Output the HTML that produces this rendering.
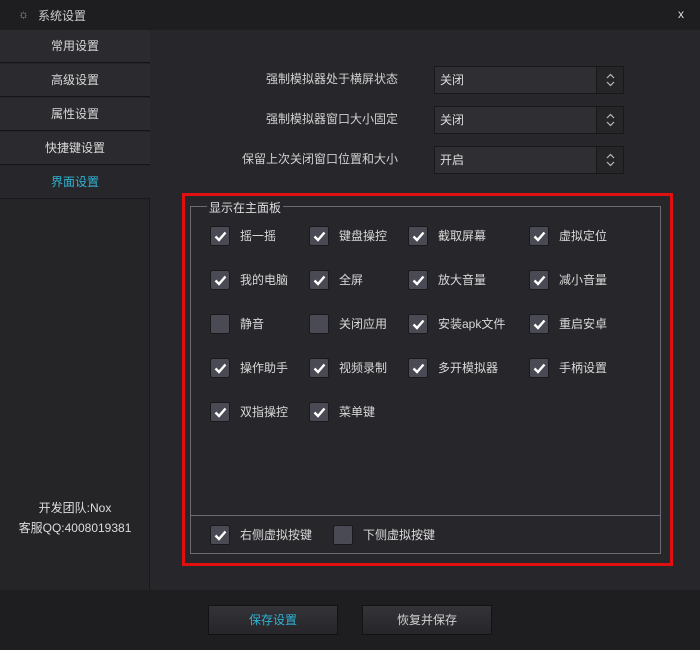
<!DOCTYPE html>
<html><head><meta charset="utf-8"><style>
*{margin:0;padding:0;box-sizing:border-box}
body{width:700px;height:650px;background:#27272b;font-family:"Liberation Sans","Noto Sans CJK SC",sans-serif;font-size:12px;color:#d0d0d0;position:relative;overflow:hidden}
.a{position:absolute}
.title{left:0;top:0;width:700px;height:30px;background:#1e1e21}
.side{left:0;top:30px;width:150px;height:560px;background:#252528;border-right:1px solid #1a1a1c}
.it{position:absolute;left:0;width:150px;height:33px;background:#2b2b2f;border-bottom:1px solid #151517;text-align:center;line-height:33px;font-size:12px;color:#d8d8d8}
.sel{width:190px;height:28px;background:#2e2e33;border:1px solid #18181a;color:#ddd;line-height:26px;padding-left:5px;font-size:12px}
.sel i{position:absolute;right:0;top:0;width:27px;height:26px;background:#262629;border-left:1px solid #18181a}
.sel i svg{position:absolute;left:9px;top:6px}
.cb{width:20px;height:20px;background:#4a4a54;border:1px solid #1a1a1e;border-radius:2px}
.cb svg{position:absolute;left:3px;top:4px}
.lb{font-size:12px;color:#d8d8d8}
.btn{width:130px;height:30px;background:linear-gradient(#333338,#26262a);border:1px solid #121214;text-align:center;line-height:28px;font-size:12px}
</style></head><body>
<div class="a title"></div>
<div class="a" style="left:18px;top:7px;color:#aaa;font-size:12px">☼</div>
<div class="a" style="left:38px;top:7px;color:#ccc;font-size:12px">系统设置</div>
<div class="a" style="left:678px;top:7px;color:#ddd;font-size:12px">x</div>
<div class="a side">
<div class="it" style="top:0">常用设置</div>
<div class="it" style="top:34px">高级设置</div>
<div class="it" style="top:68px">属性设置</div>
<div class="it" style="top:102px">快捷键设置</div>
<div class="it" style="top:136px;background:#27272b;color:#2fb3d3;border-bottom:1px solid #1a1a1c">界面设置</div>
<div class="a" style="left:0;top:468px;width:150px;text-align:center;line-height:20px;color:#ddd">开发团队:Nox<br>客服QQ:4008019381</div>
</div>
<div class="a" style="right:302px;top:70px">强制模拟器处于横屏状态</div>
<div class="a" style="right:302px;top:110px">强制模拟器窗口大小固定</div>
<div class="a" style="right:302px;top:150px">保留上次关闭窗口位置和大小</div>
<div class="a sel" style="left:434px;top:66px">关闭<i><svg width="9" height="14" viewBox="0 0 9 14"><path d="M1 5L4.5 1.5L8 5M1 9L4.5 12.5L8 9" stroke="#bbb" stroke-width="1.2" fill="none"/></svg></i></div>
<div class="a sel" style="left:434px;top:106px">关闭<i><svg width="9" height="14" viewBox="0 0 9 14"><path d="M1 5L4.5 1.5L8 5M1 9L4.5 12.5L8 9" stroke="#bbb" stroke-width="1.2" fill="none"/></svg></i></div>
<div class="a sel" style="left:434px;top:146px">开启<i><svg width="9" height="14" viewBox="0 0 9 14"><path d="M1 5L4.5 1.5L8 5M1 9L4.5 12.5L8 9" stroke="#bbb" stroke-width="1.2" fill="none"/></svg></i></div>
<div class="a" style="left:182px;top:193px;width:491px;height:373px;border:3px solid #e01010"></div>
<div class="a" style="left:190px;top:206px;width:471px;height:348px;border:1px solid #6a6a70"></div>
<div class="a" style="left:190px;top:515px;width:471px;height:1px;background:#6a6a70"></div>
<div class="a" style="left:207px;top:199px;background:#27272b;padding:0 2px;color:#ddd">显示在主面板</div>
<div id="g"></div>
<div class="a" style="left:0;top:590px;width:700px;height:60px;background:#1e1e21"></div>
<div class="a btn" style="left:208px;top:605px;color:#2fb3d3">保存设置</div>
<div class="a btn" style="left:362px;top:605px">恢复并保存</div>
<script>
var xs=[210,309,408,529],ys=[226,270,314,358,402];
var d=[["摇一摇",1],["键盘操控",1],["截取屏幕",1],["虚拟定位",1],["我的电脑",1],["全屏",1],["放大音量",1],["减小音量",1],["静音",0],["关闭应用",0],["安装apk文件",1],["重启安卓",1],["操作助手",1],["视频录制",1],["多开模拟器",1],["手柄设置",1],["双指操控",1],["菜单键",1]];
var h="",ck='<svg width="13" height="11" viewBox="0 0 13 11"><path d="M1.5 5.5L5 9L11.5 1.5" stroke="#fff" stroke-width="2.4" fill="none"/></svg>';
function add(x,y,t,c){h+='<div class="a cb" style="left:'+x+'px;top:'+y+'px">'+(c?ck:'')+'</div><div class="a lb" style="left:'+(x+30)+'px;top:'+(y+1)+'px">'+t+'</div>';}
d.forEach(function(e,i){add(xs[i%4],ys[Math.floor(i/4)],e[0],e[1]);});
add(210,525,"右侧虚拟按键",1);add(333,525,"下侧虚拟按键",0);
document.getElementById("g").innerHTML=h;
</script>
</body></html>
